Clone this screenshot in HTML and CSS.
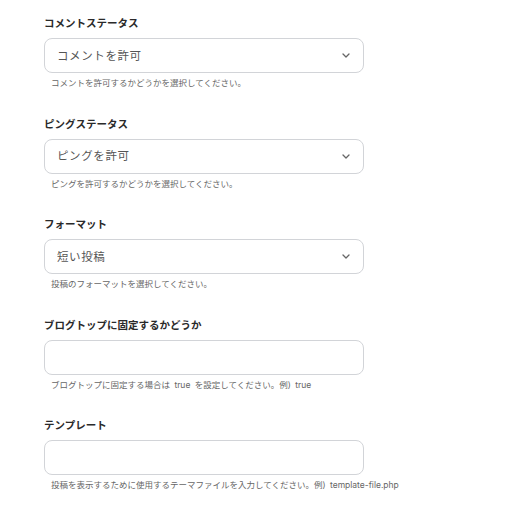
FILE: index.html
```html
<!DOCTYPE html>
<html lang="ja">
  <head>
    <meta charset="utf-8">
    <link rel="stylesheet" href="styles.css">
  </head>
  <body>
    <form class="settings">
      <div class="field">
        <label class="field-label">コメントステータス</label>
        <div class="select-wrap">
          <select class="control">
            <option>コメントを許可</option>
            <option>コメントを許可しない</option>
          </select>
          <svg class="chevron" width="8" height="5" viewBox="0 0 8 5"><path d="M1 1l3 3 3-3" fill="none" stroke="#666" stroke-width="1.3" stroke-linecap="round" stroke-linejoin="round"/></svg>
        </div>
        <p class="help">コメントを許可するかどうかを選択してください。</p>
      </div>

      <div class="field">
        <label class="field-label">ピングステータス</label>
        <div class="select-wrap">
          <select class="control">
            <option>ピングを許可</option>
            <option>ピングを許可しない</option>
          </select>
          <svg class="chevron" width="8" height="5" viewBox="0 0 8 5"><path d="M1 1l3 3 3-3" fill="none" stroke="#666" stroke-width="1.3" stroke-linecap="round" stroke-linejoin="round"/></svg>
        </div>
        <p class="help">ピングを許可するかどうかを選択してください。</p>
      </div>

      <div class="field">
        <label class="field-label">フォーマット</label>
        <div class="select-wrap">
          <select class="control">
            <option>短い投稿</option>
            <option>標準</option>
          </select>
          <svg class="chevron" width="8" height="5" viewBox="0 0 8 5"><path d="M1 1l3 3 3-3" fill="none" stroke="#666" stroke-width="1.3" stroke-linecap="round" stroke-linejoin="round"/></svg>
        </div>
        <p class="help">投稿のフォーマットを選択してください。</p>
      </div>

      <div class="field">
        <label class="field-label">ブログトップに固定するかどうか</label>
        <input class="control" type="text">
        <p class="help">ブログトップに固定する場合は true を設定してください。例) true</p>
      </div>

      <div class="field">
        <label class="field-label">テンプレート</label>
        <input class="control" type="text">
        <p class="help">投稿を表示するために使用するテーマファイルを入力してください。例) template-file.php</p>
      </div>
    </form>
  </body>
</html>
```

FILE: styles.css
```css
body {
  margin: 0;
  background: #fff;
  font-family: "Inter", "Noto Sans CJK JP", sans-serif;
  color: #222;
}

.settings {
  padding: 16px 0 0 44px;
  width: 320px;
}

.field {
  display: flex;
  flex-direction: column;
  margin-bottom: 27.5px;
}

.field-label {
  font-size: 10.5px;
  font-weight: 700;
  line-height: 16px;
  color: #2a2a2a;
  margin-bottom: 6px;
}

.select-wrap {
  position: relative;
}

.control {
  display: block;
  box-sizing: border-box;
  width: 100%;
  height: 35px;
  padding: 0 12px;
  border: 1px solid #d2d4d8;
  border-radius: 8px;
  background: #fff;
  font-family: inherit;
  font-size: 11.5px;
  font-weight: 400;
  letter-spacing: 0.6px;
  color: #555;
  outline: none;
  appearance: none;
  -webkit-appearance: none;
}

.chevron {
  position: absolute;
  right: 14px;
  top: 15px;
  pointer-events: none;
}

.help {
  margin: 4px 0 0 7px;
  font-size: 8.5px;
  line-height: 12px;
  color: #666;
  white-space: nowrap;
  word-spacing: 2px;
}
```
